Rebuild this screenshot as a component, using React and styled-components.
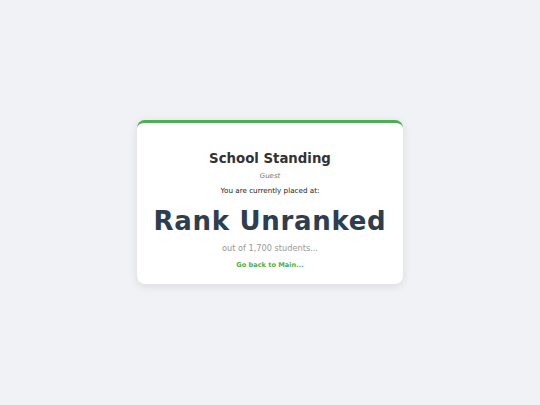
import React from 'react';
import styled, { createGlobalStyle } from 'styled-components';

const GlobalStyle = createGlobalStyle`
  html, body {
    margin: 0;
    padding: 0;
    height: 100%;
  }
  body {
    background-color: #f0f2f5;
    font-family: "DejaVu Sans", Verdana, sans-serif;
  }
  #root {
    height: 100%;
  }
`;

const Page = styled.div`
  display: flex;
  align-items: flex-start;
  justify-content: center;
  height: 405px;
  padding-top: 120px;
  box-sizing: border-box;
`;

const Card = styled.div`
  width: 266px;
  box-sizing: border-box;
  padding: 28px 12px 14px;
  background-color: #ffffff;
  border-top: 3px solid #4caf50;
  border-radius: 8px;
  box-shadow: 0 2px 10px rgba(0, 0, 0, 0.1);
  text-align: center;
`;

const Title = styled.h1`
  margin: 0;
  font-size: 13.3px;
  font-weight: bold;
  color: #333333;
  line-height: 16px;
`;

const UserName = styled.div`
  margin-top: 4px;
  font-size: 7px;
  font-style: italic;
  color: #777777;
  line-height: 10px;
`;

const Placed = styled.p`
  margin: 5px 0 0;
  font-size: 7.2px;
  color: #1a1a1a;
  line-height: 10px;
`;

const Rank = styled.div`
  margin-top: 10px;
  font-size: 26px;
  letter-spacing: 0.7px;
  font-weight: bold;
  color: #2c3e50;
  line-height: 30px;
  white-space: nowrap;
`;

const OutOf = styled.div`
  margin-top: 6px;
  font-size: 8.2px;
  color: #999999;
  line-height: 12px;
`;

const LinkRow = styled.div`
  margin-top: 6px;
  font-size: 6.6px;
  line-height: 10px;
`;

const BackLink = styled.a`
  font-weight: bold;
  color: #4caf50;
  text-decoration: none;
  cursor: pointer;
`;

export default function App() {
  return (
    <>
      <GlobalStyle />
      <Page>
        <Card>
          <Title>School Standing</Title>
          <UserName>Guest</UserName>
          <Placed>You are currently placed at:</Placed>
          <Rank>Rank Unranked</Rank>
          <OutOf>out of 1,700 students...</OutOf>
          <LinkRow>
            <BackLink href="#">Go back to Main...</BackLink>
          </LinkRow>
        </Card>
      </Page>
    </>
  );
}
